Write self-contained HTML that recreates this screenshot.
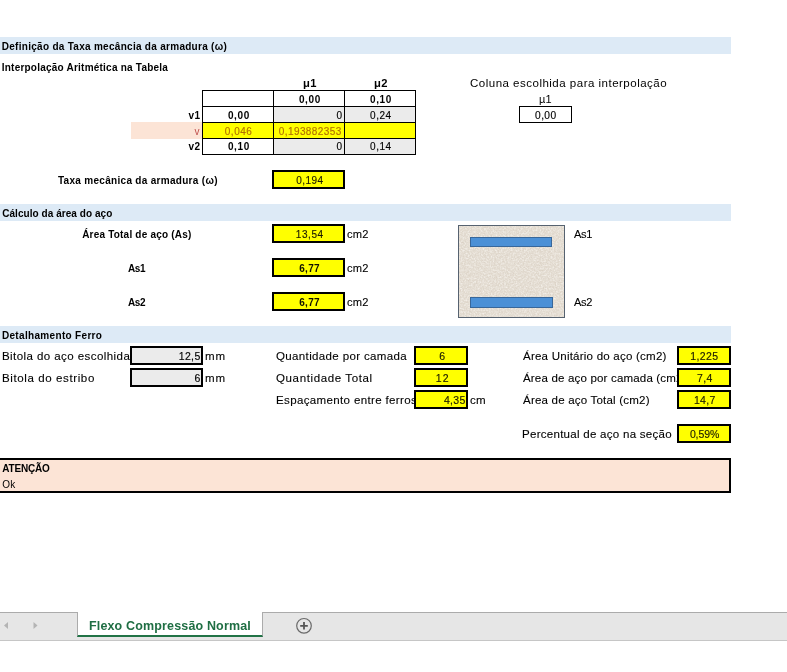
<!DOCTYPE html>
<html lang="pt"><head><meta charset="utf-8"><title>Flexo Compressão Normal</title>
<style>
html,body{margin:0;padding:0;background:#fff;}
body{width:787px;height:672px;position:relative;overflow:hidden;font-family:"Liberation Sans", sans-serif;}
.t{position:absolute;white-space:nowrap;line-height:normal;color:#000;transform-origin:0 0;}
.tx{position:absolute;left:0;top:0;width:787px;height:672px;will-change:transform;}
.b{position:absolute;box-sizing:border-box;}
.y{background:#ffff00;border:2px solid #000;}
.g{background:#ebebeb;border:2px solid #000;}
</style></head><body>
<!-- section bands -->
<div class="b" style="left:0;top:37px;width:731px;height:17px;background:#ddeaf6"></div>
<div class="b" style="left:0;top:204px;width:731px;height:17px;background:#ddeaf6"></div>
<div class="b" style="left:0;top:326px;width:731px;height:17px;background:#ddeaf6"></div>

<!-- interpolation table -->
<div class="b" style="left:131px;top:122px;width:71px;height:17px;background:#fce4d6"></div>
<div class="b" style="left:273px;top:106px;width:143px;height:16px;background:#ebebeb"></div>
<div class="b" style="left:202px;top:122px;width:214px;height:16px;background:#ffff00"></div>
<div class="b" style="left:273px;top:138px;width:143px;height:16px;background:#ebebeb"></div>
<!-- grid lines -->
<div class="b" style="left:202px;top:90px;width:214px;height:1px;background:#000"></div>
<div class="b" style="left:202px;top:106px;width:214px;height:1px;background:#000"></div>
<div class="b" style="left:202px;top:122px;width:214px;height:1px;background:#000"></div>
<div class="b" style="left:202px;top:138px;width:214px;height:1px;background:#000"></div>
<div class="b" style="left:202px;top:154px;width:214px;height:1px;background:#000"></div>
<div class="b" style="left:202px;top:90px;width:1px;height:65px;background:#000"></div>
<div class="b" style="left:273px;top:90px;width:1px;height:65px;background:#000"></div>
<div class="b" style="left:344px;top:90px;width:1px;height:65px;background:#000"></div>
<div class="b" style="left:415px;top:90px;width:1px;height:65px;background:#000"></div>
<!-- chosen column box -->
<div class="b" style="left:519px;top:106px;width:53px;height:17px;border:1px solid #000;background:#fff"></div>

<!-- yellow result boxes -->
<div class="b y" style="left:272px;top:170px;width:73px;height:19px"></div>
<div class="b y" style="left:272px;top:224px;width:73px;height:19px"></div>
<div class="b y" style="left:272px;top:258px;width:73px;height:19px"></div>
<div class="b y" style="left:272px;top:292px;width:73px;height:19px"></div>

<!-- cross-section picture -->
<svg class="b" style="left:458px;top:225px" width="107" height="93" viewBox="0 0 107 93">
  <defs>
    <filter id="gr" x="0" y="0" width="100%" height="100%">
      <feTurbulence type="fractalNoise" baseFrequency="0.75" numOctaves="2" seed="7" result="n"/>
      <feColorMatrix in="n" type="matrix" values="0 0 0 0 0.66  0 0 0 0 0.58  0 0 0 0 0.50  1.3 0 0 0 -0.52"/>
    </filter>
    <filter id="gl" x="0" y="0" width="100%" height="100%">
      <feTurbulence type="fractalNoise" baseFrequency="0.6" numOctaves="2" seed="21" result="n"/>
      <feColorMatrix in="n" type="matrix" values="0 0 0 0 1  0 0 0 0 0.99  0 0 0 0 0.97  0 1.3 0 0 -0.52"/>
    </filter>
  </defs>
  <rect x="0.5" y="0.5" width="106" height="92" fill="#e3dcd1"/>
  <rect x="1" y="1" width="105" height="91" filter="url(#gr)"/>
  <rect x="1" y="1" width="105" height="91" filter="url(#gl)"/>
  <rect x="0.5" y="0.5" width="106" height="92" fill="none" stroke="#566270" stroke-width="1"/>
  <rect x="12.5" y="12.5" width="81" height="9" fill="#4b90d6" stroke="#38679a" stroke-width="1"/>
  <rect x="12.5" y="72.5" width="82" height="10" fill="#4b90d6" stroke="#38679a" stroke-width="1"/>
</svg>

<!-- detalhamento boxes -->
<div class="b g" style="left:130px;top:346px;width:73px;height:19px"></div>
<div class="b g" style="left:130px;top:368px;width:73px;height:19px"></div>
<div class="b y" style="left:414px;top:346px;width:54px;height:19px"></div>
<div class="b y" style="left:414px;top:368px;width:54px;height:19px"></div>
<div class="b y" style="left:414px;top:390px;width:54px;height:19px"></div>
<div class="b y" style="left:677px;top:346px;width:54px;height:19px"></div>
<div class="b y" style="left:677px;top:368px;width:54px;height:19px"></div>
<div class="b y" style="left:677px;top:390px;width:54px;height:19px"></div>
<div class="b y" style="left:677px;top:424px;width:54px;height:19px"></div>

<!-- attention box -->
<div class="b" style="left:-2px;top:458px;width:733px;height:35px;background:#fce4d6;border:2px solid #000"></div>

<!-- sheet tab bar -->
<div class="b" style="left:0;top:612px;width:787px;height:29px;background:#e6e6e6;border-top:1px solid #ababab;border-bottom:1px solid #c6c6c6"></div>
<div class="b" style="left:77px;top:612px;width:186px;background:#fff;border-left:1px solid #ababab;border-right:1px solid #ababab;border-bottom:2px solid #217346;height:25px"></div>
<svg class="b" style="left:0;top:612px" width="787" height="29" viewBox="0 0 787 29">
  <polygon points="4,13.5 8,10 8,17" fill="#b4b4b4"/>
  <polygon points="37.5,13.5 33.5,10 33.5,17" fill="#b4b4b4"/>
  <circle cx="304" cy="13.8" r="7.3" fill="none" stroke="#6a6a6a" stroke-width="1.2"/>
  <path d="M300.2 13.8h7.6M304 10v7.6" stroke="#555" stroke-width="1.8" fill="none"/>
</svg>

<div class="tx">
<span class="t" style="left:1.75px;top:40.75px;font-size:10px;font-weight:bold;letter-spacing:0.285px;">Definição da Taxa mecância da armadura (ω)</span>
<span class="t" style="left:1.75px;top:61.85px;font-size:10px;font-weight:bold;letter-spacing:0.224px;">Interpolação Aritmética na Tabela</span>
<span class="t" style="left:302.77px;top:78.25px;font-size:10px;font-weight:bold;letter-spacing:0.264px;transform:scaleX(1.12);">μ1</span>
<span class="t" style="left:373.67px;top:78.25px;font-size:10px;font-weight:bold;letter-spacing:0.364px;transform:scaleX(1.12);">μ2</span>
<span class="t" style="left:298.90px;top:93.65px;font-size:10px;font-weight:bold;letter-spacing:0.65px;">0,00</span>
<span class="t" style="left:370.00px;top:93.65px;font-size:10px;font-weight:bold;letter-spacing:0.583px;">0,10</span>
<span class="t" style="left:188.50px;top:109.75px;font-size:10px;font-weight:bold;letter-spacing:0.338px;">v1</span>
<span class="t" style="left:227.90px;top:109.75px;font-size:10px;font-weight:bold;letter-spacing:0.65px;">0,00</span>
<span class="t" style="left:336.40px;top:109.75px;font-size:10px;-webkit-text-stroke:0.15px currentColor;">0</span>
<span class="t" style="left:370.10px;top:109.75px;font-size:10px;letter-spacing:0.483px;-webkit-text-stroke:0.15px currentColor;">0,24</span>
<span class="t" style="left:194.50px;top:125.65px;font-size:10px;color:#c0504d;">v</span>
<span class="t" style="left:224.75px;top:125.55px;font-size:10px;color:#b27000;letter-spacing:0.534px;-webkit-text-stroke:0.15px currentColor;">0,046</span>
<span class="t" style="left:278.75px;top:125.65px;font-size:10px;color:#b27000;letter-spacing:0.417px;-webkit-text-stroke:0.15px currentColor;">0,193882353</span>
<span class="t" style="left:188.60px;top:141.35px;font-size:10px;font-weight:bold;letter-spacing:0.238px;">v2</span>
<span class="t" style="left:227.90px;top:141.35px;font-size:10px;font-weight:bold;letter-spacing:0.65px;">0,10</span>
<span class="t" style="left:336.40px;top:141.35px;font-size:10px;-webkit-text-stroke:0.15px currentColor;">0</span>
<span class="t" style="left:370.10px;top:141.35px;font-size:10px;letter-spacing:0.483px;-webkit-text-stroke:0.15px currentColor;">0,14</span>
<span class="t" style="left:470.05px;top:77.40px;font-size:10.5px;letter-spacing:0.429px;transform:scaleX(1.1);">Coluna escolhida para interpolação</span>
<span class="t" style="left:538.93px;top:94.25px;font-size:10px;letter-spacing:0.243px;transform:scaleX(1.1);">µ1</span>
<span class="t" style="left:535.10px;top:109.67px;font-size:10.2px;letter-spacing:0.39px;-webkit-text-stroke:0.15px currentColor;">0,00</span>
<span class="t" style="left:57.90px;top:175.05px;font-size:10px;font-weight:bold;letter-spacing:0.303px;">Taxa mecânica da armadura (ω)</span>
<span class="t" style="left:296.20px;top:174.75px;font-size:10px;color:#1c1c00;letter-spacing:0.472px;-webkit-text-stroke:0.15px currentColor;">0,194</span>
<span class="t" style="left:2.20px;top:207.75px;font-size:10px;font-weight:bold;letter-spacing:0.059px;">Cálculo da área do aço</span>
<span class="t" style="left:82.15px;top:228.65px;font-size:10px;font-weight:bold;letter-spacing:0.207px;">Área Total de aço (As)</span>
<span class="t" style="left:127.90px;top:262.85px;font-size:10px;font-weight:bold;letter-spacing:-0.342px;">As1</span>
<span class="t" style="left:127.90px;top:296.85px;font-size:10px;font-weight:bold;letter-spacing:-0.292px;">As2</span>
<span class="t" style="left:295.80px;top:228.65px;font-size:10px;color:#1c1c00;letter-spacing:0.572px;-webkit-text-stroke:0.15px currentColor;">13,54</span>
<span class="t" style="left:299.30px;top:262.75px;font-size:10px;font-weight:bold;color:#111100;letter-spacing:0.266px;">6,77</span>
<span class="t" style="left:299.30px;top:296.75px;font-size:10px;font-weight:bold;color:#111100;letter-spacing:0.266px;">6,77</span>
<span class="t" style="left:346.77px;top:228.58px;font-size:10.3px;letter-spacing:0.247px;transform:scaleX(1.08);-webkit-text-stroke:0.1px currentColor;">cm2</span>
<span class="t" style="left:346.77px;top:262.88px;font-size:10.3px;letter-spacing:0.247px;transform:scaleX(1.08);-webkit-text-stroke:0.1px currentColor;">cm2</span>
<span class="t" style="left:346.77px;top:296.88px;font-size:10.3px;letter-spacing:0.247px;transform:scaleX(1.08);-webkit-text-stroke:0.1px currentColor;">cm2</span>
<span class="t" style="left:574.40px;top:228.30px;font-size:10.5px;letter-spacing:-0.278px;transform:scaleX(1.05);-webkit-text-stroke:0.1px currentColor;">As1</span>
<span class="t" style="left:574.40px;top:296.40px;font-size:10.5px;letter-spacing:-0.278px;transform:scaleX(1.05);-webkit-text-stroke:0.1px currentColor;">As2</span>
<span class="t" style="left:1.95px;top:329.75px;font-size:10px;font-weight:bold;letter-spacing:0.326px;">Detalhamento Ferro</span>
<span class="t" style="left:1.67px;top:350.20px;font-size:10.5px;letter-spacing:0.373px;transform:scaleX(1.1);-webkit-text-stroke:0.1px currentColor;width:116.67px;overflow:hidden;">Bitola do aço escolhida</span>
<span class="t" style="left:1.67px;top:372.20px;font-size:10.5px;letter-spacing:0.539px;transform:scaleX(1.1);-webkit-text-stroke:0.1px currentColor;">Bitola do estribo</span>
<span class="t" style="left:178.70px;top:350.30px;font-size:10.5px;letter-spacing:0.368px;-webkit-text-stroke:0.15px currentColor;">12,5</span>
<span class="t" style="left:194.40px;top:372.20px;font-size:10.5px;-webkit-text-stroke:0.15px currentColor;">6</span>
<span class="t" style="left:204.98px;top:350.30px;font-size:10.5px;letter-spacing:0.894px;transform:scaleX(1.1);-webkit-text-stroke:0.1px currentColor;">mm</span>
<span class="t" style="left:204.98px;top:372.20px;font-size:10.5px;letter-spacing:0.894px;transform:scaleX(1.1);-webkit-text-stroke:0.1px currentColor;">mm</span>
<span class="t" style="left:276.11px;top:350.10px;font-size:10.5px;letter-spacing:0.307px;transform:scaleX(1.1);-webkit-text-stroke:0.1px currentColor;">Quantidade por camada</span>
<span class="t" style="left:276.11px;top:372.20px;font-size:10.5px;letter-spacing:0.546px;transform:scaleX(1.1);-webkit-text-stroke:0.1px currentColor;">Quantidade Total</span>
<span class="t" style="left:275.67px;top:394.10px;font-size:10.5px;letter-spacing:0.309px;transform:scaleX(1.1);-webkit-text-stroke:0.1px currentColor;width:125.76px;overflow:hidden;">Espaçamento entre ferros</span>
<span class="t" style="left:439.25px;top:350.10px;font-size:10.5px;color:#1c1c00;-webkit-text-stroke:0.15px currentColor;">6</span>
<span class="t" style="left:435.80px;top:372.20px;font-size:10.5px;color:#1c1c00;letter-spacing:1.01px;-webkit-text-stroke:0.15px currentColor;">12</span>
<span class="t" style="left:444.00px;top:394.10px;font-size:10.5px;color:#1c1c00;letter-spacing:0.268px;-webkit-text-stroke:0.15px currentColor;">4,35</span>
<span class="t" style="left:469.66px;top:394.10px;font-size:10.5px;letter-spacing:0.141px;transform:scaleX(1.1);-webkit-text-stroke:0.1px currentColor;">cm</span>
<span class="t" style="left:522.80px;top:350.10px;font-size:10.5px;letter-spacing:0.196px;transform:scaleX(1.1);-webkit-text-stroke:0.1px currentColor;">Área Unitário do aço (cm2)</span>
<span class="t" style="left:522.80px;top:372.20px;font-size:10.5px;letter-spacing:0.145px;transform:scaleX(1.1);-webkit-text-stroke:0.1px currentColor;width:140.18px;overflow:hidden;">Área de aço por camada (cm2)</span>
<span class="t" style="left:522.80px;top:394.10px;font-size:10.5px;letter-spacing:0.169px;transform:scaleX(1.1);-webkit-text-stroke:0.1px currentColor;">Área de aço Total (cm2)</span>
<span class="t" style="left:521.87px;top:428.20px;font-size:10.5px;letter-spacing:0.234px;transform:scaleX(1.1);-webkit-text-stroke:0.1px currentColor;">Percentual de aço na seção</span>
<span class="t" style="left:690.35px;top:350.10px;font-size:10.5px;color:#1c1c00;letter-spacing:0.366px;-webkit-text-stroke:0.15px currentColor;">1,225</span>
<span class="t" style="left:697.10px;top:372.20px;font-size:10.5px;color:#1c1c00;letter-spacing:0.297px;-webkit-text-stroke:0.15px currentColor;">7,4</span>
<span class="t" style="left:693.95px;top:394.10px;font-size:10.5px;color:#1c1c00;letter-spacing:0.318px;-webkit-text-stroke:0.15px currentColor;">14,7</span>
<span class="t" style="left:689.90px;top:428.20px;font-size:10.5px;color:#1c1c00;letter-spacing:-0.109px;-webkit-text-stroke:0.15px currentColor;">0,59%</span>
<span class="t" style="left:2.20px;top:462.75px;font-size:10px;font-weight:bold;letter-spacing:-0.187px;">ATENÇÃO</span>
<span class="t" style="left:2.15px;top:478.65px;font-size:10px;letter-spacing:0.222px;">Ok</span>
<span class="t" style="left:89.12px;top:618.09px;font-size:13.6px;font-weight:bold;color:#1f6e43;letter-spacing:0.163px;transform:scaleX(0.92);">Flexo Compressão Normal</span>
</div>
</body></html>
